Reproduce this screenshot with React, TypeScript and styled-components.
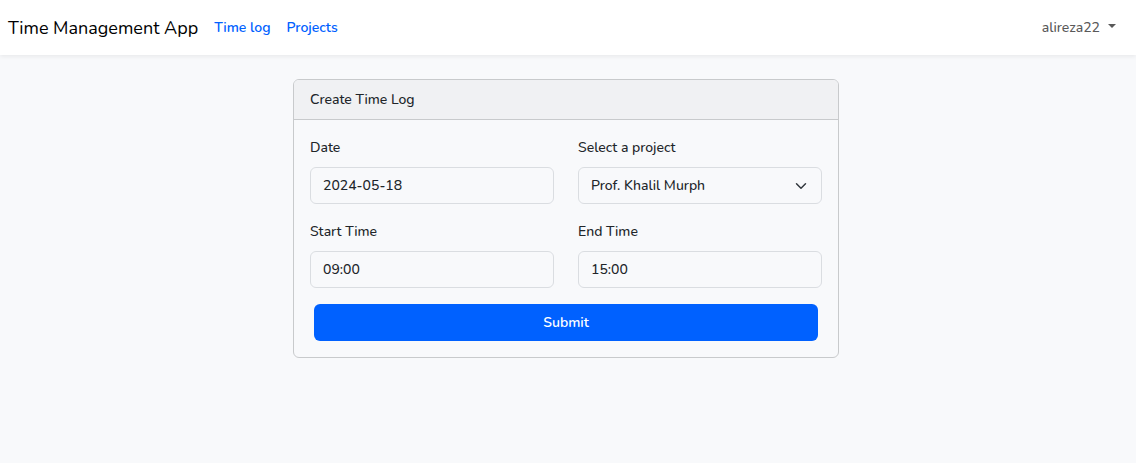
import React, { useState } from 'react';
import styled, { createGlobalStyle, css } from 'styled-components';

const GlobalStyle = createGlobalStyle`
  *, *::before, *::after { box-sizing: border-box; }
  body {
    margin: 0;
    background: #f8f9fb;
    color: #212529;
    font-family: Nunito, Lato, sans-serif;
    font-size: 14px;
    font-weight: 500;
    line-height: 23px;
  }
`;

const Navbar = styled.nav`
  display: flex;
  align-items: center;
  min-height: 55px;
  padding: 8px 20px 8px 8px;
  background: #fff;
  box-shadow: 0 2px 4px rgba(0, 0, 0, 0.06);
`;

const Brand = styled.a`
  margin-right: 16px;
  color: #000;
  font-size: 18px;
  font-weight: 400;
  line-height: 28px;
  text-decoration: none;
  white-space: nowrap;
`;

const NavLinks = styled.div`
  display: flex;
  gap: 16px;
`;

const NavLink = styled.a`
  color: #0061ff;
  font-weight: 600;
  text-decoration: none;
  white-space: nowrap;
`;

const UserMenu = styled.button`
  display: flex;
  align-items: center;
  gap: 8px;
  margin-left: auto;
  padding: 0;
  border: 0;
  background: none;
  color: #595959;
  font: inherit;
  cursor: pointer;
`;

const Caret = styled.span`
  margin-bottom: 3px;
  border: 4px solid transparent;
  border-top-color: currentColor;
  border-bottom: 0;
`;

const Main = styled.main`
  display: flex;
  justify-content: center;
  padding: 24px 16px 24px 12px;
`;

const Card = styled.section`
  width: 100%;
  max-width: 546px;
  overflow: hidden;
  border: 1px solid #c8cacc;
  border-radius: 6px;
`;

const CardHeader = styled.header`
  padding: 8px 16px;
  border-bottom: 1px solid #c8cacc;
  background: #f0f1f3;
`;

const Form = styled.form`
  display: flex;
  flex-direction: column;
  gap: 16px;
  padding: 16px;
`;

const Fields = styled.div`
  display: grid;
  grid-template-columns: 1fr 1fr;
  gap: 16px 24px;
`;

const Field = styled.div`
  display: flex;
  flex-direction: column;
  gap: 8px;
  min-width: 0;
`;

const control = css`
  width: 100%;
  height: 37px;
  padding: 6px 12px;
  border: 1px solid #dadde1;
  border-radius: 6px;
  background: #f8f9fb;
  color: #212529;
  font: inherit;
`;

const Input = styled.input`
  ${control}
`;

const SelectBox = styled.div`
  display: grid;
  align-items: center;

  > * { grid-area: 1 / 1; }
`;

const Select = styled.select`
  ${control}
  appearance: none;
`;

const Chevron = styled.svg`
  justify-self: end;
  width: 16px;
  height: 12px;
  margin-right: 13px;
  pointer-events: none;
`;

const SubmitButton = styled.button`
  height: 37px;
  margin: 0 4px;
  border: 0;
  border-radius: 6px;
  background: #0061ff;
  color: #fff;
  font: inherit;
  font-weight: 600;
  cursor: pointer;
`;

export default function App() {
  const [date, setDate] = useState('2024-05-18');
  const [start, setStart] = useState('09:00');
  const [end, setEnd] = useState('15:00');

  return (
    <>
      <GlobalStyle />
      <Navbar>
        <Brand href="#">Time Management App</Brand>
        <NavLinks>
          <NavLink href="#time-log">Time log</NavLink>
          <NavLink href="#projects">Projects</NavLink>
        </NavLinks>
        <UserMenu type="button" aria-haspopup="menu">
          alireza22
          <Caret />
        </UserMenu>
      </Navbar>
      <Main>
        <Card>
          <CardHeader>Create Time Log</CardHeader>
          <Form onSubmit={(e) => e.preventDefault()}>
            <Fields>
              <Field>
                <label htmlFor="date">Date</label>
                <Input id="date" value={date} onChange={(e) => setDate(e.target.value)} />
              </Field>
              <Field>
                <label htmlFor="project">Select a project</label>
                <SelectBox>
                  <Select id="project">
                    <option>Prof. Khalil Murph</option>
                  </Select>
                  <Chevron viewBox="0 0 16 16" aria-hidden="true">
                    <path d="m2 5 6 6 6-6" fill="none" stroke="#343a40" strokeWidth="2" strokeLinecap="round" strokeLinejoin="round" />
                  </Chevron>
                </SelectBox>
              </Field>
              <Field>
                <label htmlFor="start">Start Time</label>
                <Input id="start" value={start} onChange={(e) => setStart(e.target.value)} />
              </Field>
              <Field>
                <label htmlFor="end">End Time</label>
                <Input id="end" value={end} onChange={(e) => setEnd(e.target.value)} />
              </Field>
            </Fields>
            <SubmitButton type="submit">Submit</SubmitButton>
          </Form>
        </Card>
      </Main>
    </>
  );
}
